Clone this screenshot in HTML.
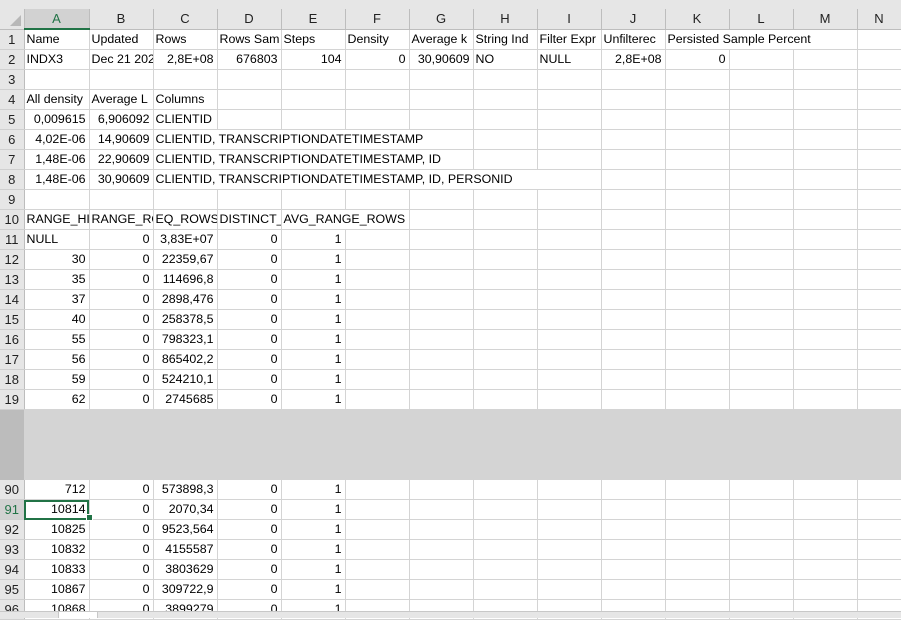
<!DOCTYPE html>
<html><head><meta charset="utf-8"><style>
body{margin:0;width:901px;height:617px;overflow:hidden;background:#fff;font-family:"Liberation Sans",Arial,sans-serif;font-size:12.4px;color:#000;position:relative}
#top{position:absolute;left:0;top:0;width:901px;height:9px;background:#e6e6e6}
table{position:absolute;left:0;top:9px;border-collapse:collapse;table-layout:fixed;width:901px}
td{height:19px;padding:0 2px;border-right:1px solid #d4d4d4;border-bottom:1px solid #d4d4d4;white-space:nowrap;overflow:hidden;line-height:19px;box-sizing:border-box}
td.r{text-align:right;padding-right:3px}
td.h{background:#e6e6e6;border-color:#bdbdbd;text-align:center;color:#222;font-size:13px}
td.rh{background:#e6e6e6;border-right:1px solid #bdbdbd;border-bottom:1px solid #d0d0d0;text-align:center;color:#222;padding:0;font-size:13px}
td.sel{background:#d2d2d2;color:#217346;border-bottom:2px solid #217346}
td.rsel{background:#d2d2d2;color:#217346}
td.cur{outline:2px solid #217346;outline-offset:-2px}
tr{height:20px}
tr.gap td{height:70px;background:#d4d4d4;border:none}
#sb{position:absolute;left:0;top:611px;width:901px;height:6px;background:#e6e6e6;border-top:1px solid #c8c8c8}
#sb2{position:absolute;left:58px;top:611px;width:38px;height:6px;background:#fff;border:1px solid #c8c8c8;border-bottom:none}
#hdl{position:absolute;left:86px;top:514px;width:5px;height:5px;background:#217346;border:1px solid #fff}
</style></head><body>
<div id="top"></div>
<table>
<colgroup><col style="width:24px"><col style="width:65px"><col style="width:64px"><col style="width:64px"><col style="width:64px"><col style="width:64px"><col style="width:64px"><col style="width:64px"><col style="width:64px"><col style="width:64px"><col style="width:64px"><col style="width:64px"><col style="width:64px"><col style="width:64px"><col style="width:44px"></colgroup>
<tr><td class="h" style="border-right-color:#bdbdbd"><svg width="14" height="14" style="vertical-align:middle;margin-left:6px"><path d="M13 2 L13 13 L2 13 Z" fill="#b8b8b8"/></svg></td><td class="h sel">A</td><td class="h">B</td><td class="h">C</td><td class="h">D</td><td class="h">E</td><td class="h">F</td><td class="h">G</td><td class="h">H</td><td class="h">I</td><td class="h">J</td><td class="h">K</td><td class="h">L</td><td class="h">M</td><td class="h">N</td></tr>
<tr><td class="rh">1</td><td>Name</td><td>Updated</td><td>Rows</td><td>Rows Sam</td><td>Steps</td><td>Density</td><td>Average k</td><td>String Ind</td><td>Filter Expr</td><td>Unfilterec</td><td colspan="3">Persisted Sample Percent</td><td></td></tr>
<tr><td class="rh">2</td><td>INDX3</td><td>Dec 21 202</td><td class="r">2,8E+08</td><td class="r">676803</td><td class="r">104</td><td class="r">0</td><td class="r">30,90609</td><td>NO</td><td>NULL</td><td class="r">2,8E+08</td><td class="r">0</td><td></td><td></td><td></td></tr>
<tr><td class="rh">3</td><td></td><td></td><td></td><td></td><td></td><td></td><td></td><td></td><td></td><td></td><td></td><td></td><td></td><td></td></tr>
<tr><td class="rh">4</td><td>All density</td><td>Average L</td><td>Columns</td><td></td><td></td><td></td><td></td><td></td><td></td><td></td><td></td><td></td><td></td><td></td></tr>
<tr><td class="rh">5</td><td class="r">0,009615</td><td class="r">6,906092</td><td>CLIENTID</td><td></td><td></td><td></td><td></td><td></td><td></td><td></td><td></td><td></td><td></td><td></td></tr>
<tr><td class="rh">6</td><td class="r">4,02E-06</td><td class="r">14,90609</td><td colspan="5">CLIENTID, TRANSCRIPTIONDATETIMESTAMP</td><td></td><td></td><td></td><td></td><td></td><td></td><td></td></tr>
<tr><td class="rh">7</td><td class="r">1,48E-06</td><td class="r">22,90609</td><td colspan="5">CLIENTID, TRANSCRIPTIONDATETIMESTAMP, ID</td><td></td><td></td><td></td><td></td><td></td><td></td><td></td></tr>
<tr><td class="rh">8</td><td class="r">1,48E-06</td><td class="r">30,90609</td><td colspan="7">CLIENTID, TRANSCRIPTIONDATETIMESTAMP, ID, PERSONID</td><td></td><td></td><td></td><td></td><td></td></tr>
<tr><td class="rh">9</td><td></td><td></td><td></td><td></td><td></td><td></td><td></td><td></td><td></td><td></td><td></td><td></td><td></td><td></td></tr>
<tr><td class="rh">10</td><td>RANGE_HI</td><td>RANGE_RO</td><td>EQ_ROWS</td><td>DISTINCT_</td><td colspan="2">AVG_RANGE_ROWS</td><td></td><td></td><td></td><td></td><td></td><td></td><td></td><td></td></tr>
<tr><td class="rh">11</td><td>NULL</td><td class="r">0</td><td class="r">3,83E+07</td><td class="r">0</td><td class="r">1</td><td></td><td></td><td></td><td></td><td></td><td></td><td></td><td></td><td></td></tr>
<tr><td class="rh">12</td><td class="r">30</td><td class="r">0</td><td class="r">22359,67</td><td class="r">0</td><td class="r">1</td><td></td><td></td><td></td><td></td><td></td><td></td><td></td><td></td><td></td></tr>
<tr><td class="rh">13</td><td class="r">35</td><td class="r">0</td><td class="r">114696,8</td><td class="r">0</td><td class="r">1</td><td></td><td></td><td></td><td></td><td></td><td></td><td></td><td></td><td></td></tr>
<tr><td class="rh">14</td><td class="r">37</td><td class="r">0</td><td class="r">2898,476</td><td class="r">0</td><td class="r">1</td><td></td><td></td><td></td><td></td><td></td><td></td><td></td><td></td><td></td></tr>
<tr><td class="rh">15</td><td class="r">40</td><td class="r">0</td><td class="r">258378,5</td><td class="r">0</td><td class="r">1</td><td></td><td></td><td></td><td></td><td></td><td></td><td></td><td></td><td></td></tr>
<tr><td class="rh">16</td><td class="r">55</td><td class="r">0</td><td class="r">798323,1</td><td class="r">0</td><td class="r">1</td><td></td><td></td><td></td><td></td><td></td><td></td><td></td><td></td><td></td></tr>
<tr><td class="rh">17</td><td class="r">56</td><td class="r">0</td><td class="r">865402,2</td><td class="r">0</td><td class="r">1</td><td></td><td></td><td></td><td></td><td></td><td></td><td></td><td></td><td></td></tr>
<tr><td class="rh">18</td><td class="r">59</td><td class="r">0</td><td class="r">524210,1</td><td class="r">0</td><td class="r">1</td><td></td><td></td><td></td><td></td><td></td><td></td><td></td><td></td><td></td></tr>
<tr><td class="rh">19</td><td class="r">62</td><td class="r">0</td><td class="r">2745685</td><td class="r">0</td><td class="r">1</td><td></td><td></td><td></td><td></td><td></td><td></td><td></td><td></td><td></td></tr>
<tr class="gap"><td style="background:#bcbcbc"></td><td colspan="14"></td></tr>
<tr><td class="rh">90</td><td class="r">712</td><td class="r">0</td><td class="r">573898,3</td><td class="r">0</td><td class="r">1</td><td></td><td></td><td></td><td></td><td></td><td></td><td></td><td></td><td></td></tr>
<tr><td class="rh rsel">91</td><td class="r cur">10814</td><td class="r">0</td><td class="r">2070,34</td><td class="r">0</td><td class="r">1</td><td></td><td></td><td></td><td></td><td></td><td></td><td></td><td></td><td></td></tr>
<tr><td class="rh">92</td><td class="r">10825</td><td class="r">0</td><td class="r">9523,564</td><td class="r">0</td><td class="r">1</td><td></td><td></td><td></td><td></td><td></td><td></td><td></td><td></td><td></td></tr>
<tr><td class="rh">93</td><td class="r">10832</td><td class="r">0</td><td class="r">4155587</td><td class="r">0</td><td class="r">1</td><td></td><td></td><td></td><td></td><td></td><td></td><td></td><td></td><td></td></tr>
<tr><td class="rh">94</td><td class="r">10833</td><td class="r">0</td><td class="r">3803629</td><td class="r">0</td><td class="r">1</td><td></td><td></td><td></td><td></td><td></td><td></td><td></td><td></td><td></td></tr>
<tr><td class="rh">95</td><td class="r">10867</td><td class="r">0</td><td class="r">309722,9</td><td class="r">0</td><td class="r">1</td><td></td><td></td><td></td><td></td><td></td><td></td><td></td><td></td><td></td></tr>
<tr><td class="rh">96</td><td class="r">10868</td><td class="r">0</td><td class="r">3899279</td><td class="r">0</td><td class="r">1</td><td></td><td></td><td></td><td></td><td></td><td></td><td></td><td></td><td></td></tr>
</table>
<div id="hdl"></div>
<div id="sb"></div><div id="sb2"></div>
</body></html>
